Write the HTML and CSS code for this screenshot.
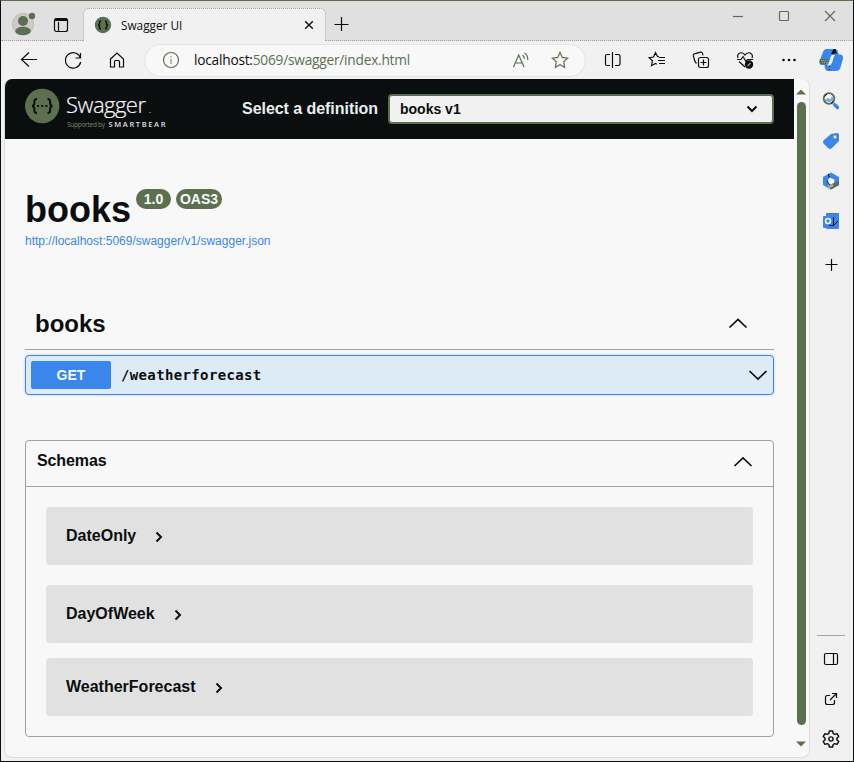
FILE: index.html
```html
<!DOCTYPE html>
<html lang="en">
<head>
<meta charset="utf-8">
<title>Swagger UI</title>
<link rel="stylesheet" href="styles.css">
</head>
<body>
<div class="window">
  <header class="titlebar">
    <div class="slot avatar"><svg width="26" height="28" viewBox="0 0 26 28"><circle cx="13" cy="15" r="11" fill="#d0c9c6"/><circle cx="13" cy="15" r="10.5" fill="none" stroke="#b5a8a3" stroke-dasharray="1 1"/><g fill="#5c7050"><circle cx="13" cy="12" r="5"/><ellipse cx="13" cy="22" rx="7.8" ry="4.3"/><circle cx="22" cy="7" r="3.2"/></g></svg></div>
    <div class="slot workspaces"><svg class="line" width="16" height="16" viewBox="0 0 16 16"><rect x="1.5" y="1.5" width="13" height="13" rx="2"/><path d="M2 3.5h12M5.5 5v9"/><path d="M2 2.5h12" stroke-width="3"/></svg></div>
    <div class="tab">
      <svg width="18" height="18" viewBox="0 0 18 18"><circle cx="9" cy="9" r="8.2" fill="#5c7050"/><path d="M7 5Q5.200 5 5.500 7 5.500 9 4 9 5.500 9 5.500 11 5.200 13 7 13M11 5q1.800 0 1.500 2 0 2 1.500 2-1.500 0-1.500 2 .3 2-1.500 2" fill="none" stroke="#0b0e0e" stroke-width="1.400"/></svg>
      <span class="tab-title">Swagger UI</span>
      <svg class="line" width="10" height="10" viewBox="0 0 10 10"><path d="M1.200 1.200l7.600 7.600M8.800 1.200L1.200 8.800" stroke-width="1.400"/></svg>
    </div>
    <svg class="line new-tab" width="16" height="16" viewBox="0 0 16 16"><path d="M8.500 1v14M1.500 8.500h14"/></svg>
    <div class="window-buttons">
      <svg width="10" height="12" viewBox="0 0 10 12"><path d="M0 6.500h10"/></svg>
      <svg width="12" height="12" viewBox="0 0 12 12"><rect x="1.500" y="1.500" width="9" height="9" rx="1"/></svg>
      <svg width="12" height="12" viewBox="0 0 12 12"><path d="M1 1l10 10M11 1L1 11"/></svg>
    </div>
  </header>

  <nav class="toolbar">
    <div class="tool"><svg class="line" width="20" height="20" viewBox="0 0 20 20"><path d="M18 9.500H2.500M10 2.500l-7.500 7 7.500 7"/></svg></div>
    <div class="tool"><svg class="line" width="20" height="20" viewBox="0 0 20 20"><path d="M17.500 8A7.700 7.700 0 1 0 17.700 12M17.500 3v5h-5"/></svg></div>
    <div class="tool"><svg class="line" width="20" height="20" viewBox="0 0 20 20"><path d="M3.500 9l6.500-6 6.500 6v8h-4v-5.500q0-1-1-1h-3q-1 0-1 1V17h-4z"/></svg></div>
    <div class="address">
      <svg class="muted" width="18" height="18" viewBox="0 0 18 18"><circle cx="9" cy="9" r="7.500"/><path d="M9 8v5M9 5v1.500" stroke="#ac9f9a" stroke-width="1.500"/></svg>
      <span class="url"><b>localhost:</b>5069/swagger/index.html</span>
      <svg class="muted read-aloud" width="18" height="18" viewBox="0 0 18 18"><path d="M1.500 16L6.700 4 12 16M3.300 12h6.900M10.500 4q2 1.500 1.800 4M12.500 2q3.500 2 3.200 7"/></svg>
      <svg class="muted" width="18" height="18" viewBox="0 0 18 18"><path d="M9 1.500l2.300 4.900 5.300.7-3.900 3.700 1 5.500L9 13.700l-4.700 2.600 1-5.500L1.400 7.100l5.300-.7z"/></svg>
    </div>
    <div class="tool"><svg class="line" width="18" height="18" viewBox="0 0 18 18"><path d="M8.500 1v16M6 3.500H3Q1.500 3.500 1.500 5v8q0 1.500 1.500 1.500h3M11 3.500h3.500q1.500 0 1.500 1.500v8q0 1.500-1.500 1.500H11"/></svg></div>
    <div class="tool"><svg class="line" width="18" height="18" viewBox="0 0 18 18"><path d="M11 5.700L9.500 5.500 7.500 1.700 5.500 6l-4.300.7 3.200 3-.9 5 4-2.200 1.300.8M11 6.500h6M10 9.500h7M11 12.500h6"/></svg></div>
    <div class="tool"><svg class="line" width="18" height="18" viewBox="0 0 18 18"><rect x="6.500" y="6.500" width="10" height="10" rx="2"/><path d="M11.500 8.500v6M8.500 11.500h6M4.500 12.500Q3 11 2.500 9L1.300 4.700Q1 3.300 2.300 2.800L8.500 1.200q1.500-.2 2 1.200l.5 2"/></svg></div>
    <div class="tool"><svg class="line" width="18" height="18" viewBox="0 0 18 18"><path d="M2 7Q.5 3 4.500 1.800 7.500 1.500 9 4q1.500-2.500 4.500-2.200Q17.500 3 16 7M1 8.500h4l2-3 3 5 1.500-2H17M3 10.500l6 5.500"/><circle cx="13" cy="13.500" r="3.600" fill="#0b0e0e"/><path d="M11.500 15l3-3" stroke="#a6aca1"/></svg></div>
    <div class="tool"><svg width="16" height="6" viewBox="0 0 16 6" fill="#0b0e0e"><circle cx="2.500" cy="3" r="1.300"/><circle cx="8" cy="3" r="1.300"/><circle cx="13.500" cy="3" r="1.300"/></svg></div>
    <div class="tool copilot"><svg width="24" height="24" viewBox="0 0 24 24"><path d="M4 4Q5 1 7.500 1H16q2.500 0 3 3l.7 2.500H22q2.500 1 2 4l-2.500 9Q20.500 23 17 23H9q-2.500 0-3-2.500L5.500 17H3Q0 17 .5 13z" fill="#3a86ed"/><path d="M1 11h8l-1.500 5H3Q0 16 .5 13z" fill="#5c7050"/><path d="M2 12.500h6M3 14.500h5" stroke="#ac9f9a" stroke-dasharray="1 1"/><path d="M13 7h3q-1 1-1.700 3.500l-1 3.500q-1 3.500-3.800 3.500H8q1.500-1 2.300-4l1-3.500Q11.700 7.500 13 7z" fill="#f1f1f1"/><path d="M12 6l2.500-5h2L18 6l-2-1-1 1z" fill="#0b0e0e"/><path d="M10.500 18v5" stroke="#0b0e0e" stroke-dasharray="1 2"/></svg></div>
  </nav>

  <div class="workspace">
    <main class="page">
      <div class="document">
        <div class="topbar">
          <svg class="logo" width="145" height="44" viewBox="0 0 145 44">
            <circle cx="17.200" cy="19" r="17.200" fill="#5c7050"/>
            <g fill="none" stroke="#0b0e0e" stroke-width="2"><path d="M12 12q-3 0-2.600 3.500 0 3.400-2.400 3.500 2.400.1 2.400 3.500-.4 3.500 2.600 3.500M22.500 12q3 0 2.600 3.500 0 3.400 2.400 3.500-2.400.1-2.400 3.500.4 3.500-2.600 3.500"/><path d="M12 19h11" stroke-dasharray="2 2.200"/></g>
            <text class="brand" x="41" y="26" textLength="80">Swagger</text><path d="M124 25.500h2" stroke="#5c7050"/>
            <text class="supported" x="42" y="40" textLength="38">Supported by</text>
            <text class="smartbear" x="83.500" y="40" textLength="57">SMARTBEAR</text>
          </svg>
          <label class="definition">Select a definition</label>
          <div class="select"><span>books v1</span><svg width="12" height="8" viewBox="0 0 12 8"><path d="M1.500 1.500L6 6l4.500-4.500" fill="none" stroke="#0b0e0e" stroke-width="2"/></svg></div>
        </div>

        <section class="info">
          <div class="title-row"><h1>books</h1><span class="badge version">1.0</span><span class="badge oas">OAS3</span></div>
          <a class="spec-link">http://localhost:5069/swagger/v1/swagger.json</a>
        </section>

        <section class="tag">
          <h2>books</h2>
          <svg class="chevron" width="20" height="12" viewBox="0 0 20 12"><path d="M1.500 9.500L10 1.500l8.500 8"/></svg>
        </section>
        <div class="operation">
          <span class="method">GET</span><code>/weatherforecast</code>
          <svg class="chevron" width="20" height="12" viewBox="0 0 20 12"><path d="M1.500 2L10 10l8.500-8"/></svg>
        </div>

        <section class="schemas">
          <div class="schemas-head"><h3>Schemas</h3><svg class="chevron" width="20" height="12" viewBox="0 0 20 12"><path d="M1.500 10L10 2l8.500 8"/></svg></div>
          <div class="models">
            <div class="model"><span>DateOnly</span><svg width="8" height="12" viewBox="0 0 8 12"><path d="M1.500 1.500L6 6l-4.500 4.500"/></svg></div>
            <div class="model"><span>DayOfWeek</span><svg width="8" height="12" viewBox="0 0 8 12"><path d="M1.500 1.500L6 6l-4.500 4.500"/></svg></div>
            <div class="model"><span>WeatherForecast</span><svg width="8" height="12" viewBox="0 0 8 12"><path d="M1.500 1.500L6 6l-4.500 4.500"/></svg></div>
          </div>
        </section>
      </div>
      <div class="scrollbar">
        <svg width="10" height="6" viewBox="0 0 10 6"><path d="M0 5.500L5 .5l5 5z" fill="#5c7050"/></svg>
        <div class="thumb"></div>
        <svg width="10" height="6" viewBox="0 0 10 6"><path d="M0 .5l5 5 5-5z" fill="#5c7050"/></svg>
      </div>
    </main>

    <aside class="sidebar">
      <svg width="18" height="18" viewBox="0 0 18 18"><path d="M11 11l2 2" stroke="#ac9f9a" stroke-width="3"/><path d="M13 13l2.500 2.500" stroke="#3a86ed" stroke-width="3.500" stroke-linecap="round"/><circle cx="7" cy="6.500" r="5.300" fill="#f8f8f8" stroke="#5c7050" stroke-width="1.800"/><path d="M2.500 4.500L5 1.800M9 11.500l2.500-2" stroke="#0b0e0e"/><path d="M4 7v2M6 6v4M8 7v3M10 5v4" stroke="#3a86ed" stroke-width="1.300"/></svg>
      <svg width="18" height="18" viewBox="0 0 18 18"><path d="M9 2l6-1q2 0 2 2v5q0 1-1 2l-6 6q-2 2-4 0L2 12q-2-2 0-4z" fill="#3a86ed"/><circle cx="13" cy="5" r="1.700" fill="#f1f1f1" stroke="#ac9f9a"/></svg>
      <svg width="18" height="18" viewBox="0 0 18 18"><path d="M9 .5l8 4.500v8l-8 4.500L1 13V5z" fill="#3a86ed"/><path d="M5 14l5-2 7-3v4l-8 4.500z" fill="#5c7050"/><path d="M6 15l5-2" stroke="#ac9f9a" stroke-width="3"/><path d="M6.500 2l1 5M8 13l-3-4" stroke="#0b0e0e"/><path d="M7 5.500l5.500 2L12 11l-4 1.500-2-3z" fill="#f8f8f8"/></svg>
      <svg width="18" height="18" viewBox="0 0 18 18"><rect x="4" y="1" width="13" height="16" rx="1" fill="#3a86ed"/><rect x="1" y="4" width="11" height="12" rx="1" fill="#3a86ed"/><path d="M5 1.500h11" stroke="#5c7050" stroke-dasharray="1 1"/><circle cx="6" cy="9" r="2.500" fill="none" stroke="#f8f8f8" stroke-width="1.400"/><path d="M11.500 5v8.500H7M12 13l4-4" fill="none" stroke="#0b0e0e"/></svg>
      <svg class="line add" width="14" height="14" viewBox="0 0 14 14"><path d="M7.500 1v12M1.500 6.500h12"/></svg>
      <hr>
      <svg class="line" width="16" height="16" viewBox="0 0 16 16"><rect x="1.500" y="2.500" width="13" height="11" rx="1.500"/><path d="M10.500 3v10"/></svg>
      <svg class="line" width="16" height="16" viewBox="0 0 16 16"><path d="M7 4.500H4.500q-2 0-2 2v5q0 2 2 2h5q2 0 2-2V9M9 2.500h4.500V7M13 3L7 9"/></svg>
      <svg class="line" width="18" height="18" viewBox="0 0 18 18"><path stroke-width="1.400" stroke-linejoin="round" d="M7.400 1h3.200l.6 2.500 1.400.8 2.400-.7 1.700 2.800-1.800 1.800v1.600l1.800 1.800-1.700 2.800-2.400-.7-1.400.8-.6 2.500H7.400l-.6-2.500-1.400-.8-2.400.7-1.700-2.800 1.800-1.800V8.200L1.300 6.400 3 3.600l2.400.7 1.400-.8z"/><circle cx="9" cy="9" r="2.100" stroke-width="1.400"/></svg>
    </aside>
  </div>
</div>
</body>
</html>
```
FILE: styles.css
```css
* { box-sizing: border-box; }
body { margin: 0; font-family: "Liberation Sans", Arial, sans-serif; color: #0b0e0e; }
svg { display: block; flex: none; }
h1, h2, h3 { margin: 0; }

.window {
  width: 854px; height: 762px;
  display: flex; flex-direction: column;
  background: #f1f1f1;
  border: 1px solid #0b0e0e; border-top-color: #5c7050;
  overflow: hidden;
}
.line { fill: none; stroke: #0b0e0e; stroke-width: 1.2; }
.muted { fill: none; stroke: #5c7050; stroke-width: 1.2; }

.titlebar { height: 40px; display: flex; background: #e0e0e0; border-bottom: 1px dotted #ac9f9a; }
.slot { display: flex; justify-content: center; }
.avatar { width: 44px; padding-top: 8px; }
.workspaces { width: 32px; padding-top: 16px; }
.tab {
  width: 243px; height: 33px; margin: 7px 0 0 6px; padding: 0 11px 0 10px;
  display: flex; align-items: center;
  background: #f1f1f1;
  border: 1px dotted #ac9f9a; border-bottom: 0; border-radius: 6px 6px 0 0;
}
.tab-title { flex: 1; margin-left: 9px; font: 11.800px/16px "Open Sans", sans-serif; }
.new-tab { margin: 15px 0 0 7px; }
.window-buttons { margin-left: auto; display: flex; }
.window-buttons svg { width: 46px; height: 12px; margin-top: 9px; fill: none; stroke: #5c7050; stroke-width: 1.2; }

.toolbar { height: 38px; display: flex; align-items: center; padding-left: 6px; }
.tool { width: 44px; flex: none; display: flex; justify-content: center; }
.copilot { width: 42px; margin-left: -1px; }
.address {
  width: 442px; height: 33px; margin: 0 5px; padding: 0 16px 0 17px;
  display: flex; align-items: center;
  background: #f8f8f8; border: 1px solid #e3e3e3; border-radius: 17px;
}
.url { flex: 1; margin-left: 14px; font: 13.700px/20px "Open Sans", sans-serif; letter-spacing: -.22px; color: #5c7050; }
.url b { font-weight: 400; color: #0b0e0e; }
.read-aloud { margin-right: 21px; }

.workspace { flex: 1; display: flex; min-height: 0; }
.page {
  width: 806px; height: 679px; margin-left: 3px; display: flex;
  background: #f8f8f8; border: 1px solid #dcdcdc; border-top: 0;
  border-radius: 8px; overflow: hidden;
}
.document { width: 789px; }

.topbar { height: 60px; background: #0b0e0e; padding: 0 20px; display: flex; align-items: center; }
.brand { font: 22px "Open Sans", sans-serif; font-weight: 300; fill: #f8f8f8; stroke: #f8f8f8; stroke-width: .2; }
.supported { font: 6.500px "Open Sans", sans-serif; fill: #7d8a70; }
.smartbear { font: 600 7.500px "Open Sans", sans-serif; fill: #e0e0e0; }
.definition { margin-left: auto; font-size: 16px; font-weight: 700; letter-spacing: -.05px; color: #e9eef0; }
.select {
  width: 386px; height: 30px; margin-left: 10px; padding: 0 14px 0 10px;
  display: flex; align-items: center; justify-content: space-between;
  background: #f1f1f1; border: 2px solid #5c7050; border-radius: 4px;
  font-size: 14px; font-weight: 700;
}

.info { height: 161px; padding: 50px 20px 0; }
.title-row { display: flex; align-items: flex-start; height: 45px; }
h1 { font-size: 36px; line-height: 42px; }
.badge {
  height: 20px; border-radius: 10px; background: #5c7050; color: #f8f8f8;
  font-size: 14px; line-height: 20px; font-weight: 700; text-align: center;
}
.version { width: 35px; margin-left: 5px; }
.oas { width: 46px; margin-left: 5px; }
.spec-link { display: block; color: #3a86ed; font-size: 12px; line-height: 14px; }

.tag {
  height: 50px; margin: 0 20px; padding: 0 26px 2px 10px;
  display: flex; align-items: center; justify-content: space-between;
  border-bottom: 1px solid #ac9f9a;
}
h2 { font-size: 24px; line-height: 28px; }
.chevron { fill: none; stroke: #0b0e0e; stroke-width: 1.7; }
.operation {
  height: 40px; margin: 5px 20px 0; padding: 0 5px;
  display: flex; align-items: center;
  background: #ddebf7; border: 1px solid #3a86ed; border-radius: 4px;
  box-shadow: 0 0 3px rgba(0, 0, 0, .19);
}
.method {
  width: 80px; height: 28px; border-radius: 2px; background: #3a86ed; color: #f8f8f8;
  font-size: 14px; line-height: 28px; font-weight: 700; text-align: center;
}
.operation code { flex: 1; margin-left: 10px; padding-bottom: 1px; font: 700 14px "DejaVu Sans Mono", monospace; letter-spacing: .36px; }

.schemas { height: 297px; margin: 45px 20px 0; border: 1px solid #ac9f9a; border-radius: 4px; }
.schemas-head {
  height: 46px; padding: 0 20px 4px 11px;
  display: flex; align-items: center; justify-content: space-between;
  border-bottom: 1px solid #ac9f9a;
}
h3 { font-size: 16px; line-height: 20px; letter-spacing: -.1px; margin-bottom: 2px; }
.models { padding: 20px 20px 0; }
.model {
  height: 58px; margin-bottom: 20px; padding: 0 20px 1px;
  display: flex; align-items: center;
  background: #e1e1e1; border-radius: 4px; font-size: 16px; font-weight: 700;
}
.model:nth-child(2) { margin-bottom: 15px; }
.model svg { margin: 2px 0 0 19px; fill: none; stroke: #0b0e0e; stroke-width: 2; }

.scrollbar { width: 14px; display: flex; flex-direction: column; align-items: center; padding: 10px 0; }
.thumb { width: 9px; height: 623px; margin: 7px 0 16px; background: #5c7050; border-radius: 5px; }

.sidebar { flex: 1; display: flex; flex-direction: column; align-items: center; padding: 13px 1px 13px 0; gap: 22px; }
.sidebar .add { margin-top: 6px; }
.sidebar hr { width: 28px; height: 1px; margin: auto 0 -8px; border: 0; background: #ac9f9a; flex: none; }
.sidebar .line:nth-last-child(3) { margin-top: 1px; }
.sidebar .line:nth-last-child(2) { margin: 2px 0 1px; }
```
